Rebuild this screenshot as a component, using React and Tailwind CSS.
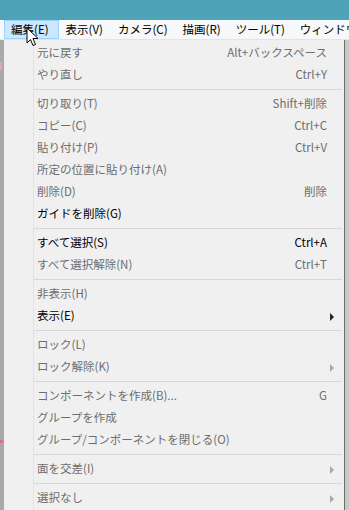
import React from "react";

const FONT = { fontFamily: '"Noto Sans CJK JP", "Noto Sans", sans-serif' };

const menuBar = [
  { label: "編集(E)", active: true },
  { label: "表示(V)" },
  { label: "カメラ(C)" },
  { label: "描画(R)" },
  { label: "ツール(T)" },
  { label: "ウィンドウ(W)" },
];

// sep: 区切り線, off: 無効項目, sub: サブメニュー矢印
const items = [
  { label: "元に戻す", key: "Alt+バックスペース", off: true },
  { label: "やり直し", key: "Ctrl+Y", off: true },
  { sep: true },
  { label: "切り取り(T)", key: "Shift+削除", off: true },
  { label: "コピー(C)", key: "Ctrl+C", off: true },
  { label: "貼り付け(P)", key: "Ctrl+V", off: true },
  { label: "所定の位置に貼り付け(A)", off: true },
  { label: "削除(D)", key: "削除", off: true },
  { label: "ガイドを削除(G)" },
  { sep: true },
  { label: "すべて選択(S)", key: "Ctrl+A" },
  { label: "すべて選択解除(N)", key: "Ctrl+T", off: true },
  { sep: true },
  { label: "非表示(H)", off: true },
  { label: "表示(E)", sub: true },
  { sep: true },
  { label: "ロック(L)", off: true },
  { label: "ロック解除(K)", off: true, sub: true },
  { sep: true },
  { label: "コンポーネントを作成(B)...", key: "G", off: true },
  { label: "グループを作成", off: true },
  { label: "グループ/コンポーネントを閉じる(O)", off: true },
  { sep: true },
  { label: "面を交差(I)", off: true, sub: true },
  { sep: true },
  { label: "選択なし", off: true, sub: true },
];

const Cursor = () => (
  <svg className="absolute left-[26px] top-[27px]" width="13" height="20" viewBox="0 0 13 20">
    <path
      d="M1 1 L1 16 L4.5 12.5 L7 18.5 L9.5 17.5 L7 11.5 L12 11.5 Z"
      fill="#fff"
      stroke="#000"
      strokeWidth="1"
      strokeLinejoin="round"
    />
  </svg>
);

export default function App() {
  return (
    <div className="relative w-[349px] h-[510px] overflow-hidden bg-[#f0f0f0] text-[11.5px]" style={FONT}>
      <div className="h-[20px] bg-[#4fa3b6]" />
      <div className="h-[20px] bg-[#f7f8f9] flex items-center pl-[4px] border-b border-[#e4e4e4]">
        {menuBar.map((m) => (
          <div
            key={m.label}
            className={`h-[19px] flex items-center pl-[6px] whitespace-nowrap text-black ${
              m.active ? "pr-[9px] bg-[#cce8ff] border border-[#99d1ff]" : "pr-[7px] border border-transparent"
            }`}
          >
            {m.label}
          </div>
        ))}
      </div>

      <div className="flex h-[470px]">
        <div className="w-[4px] bg-[#a9a9a9] flex flex-col">
          <div className="h-[22px]" />
          <div className="h-[8px] w-[2px] bg-[#e9a3b5]" />
          <div className="h-[370px]" />
          <div className="h-[3px] w-[3px] bg-[#d9708c]" />
        </div>
        <div className="w-[341px] relative bg-[#f0f0f0] border-r border-[#6e6e6e] pt-[2px]">
          <div className="absolute left-[29px] top-0 bottom-0 w-px bg-[#e3e3e3]" />
          {items.map((it, i) =>
            it.sep ? (
              <div key={i} className="h-[7px] flex items-center pl-[30px] pr-[2px]">
                <div className="h-px w-full bg-[#d7d7d7]" />
              </div>
            ) : (
              <div
                key={i}
                className={`relative h-[22px] flex items-center pl-[33px] pr-[17px] whitespace-nowrap ${
                  it.off ? "text-[#6d6d6d]" : "text-black"
                }`}
              >
                <span className="flex-1">{it.label}</span>
                {it.key && <span>{it.key}</span>}
                {it.sub && (
                  <span
                    className={`absolute right-[10px] top-[8px] w-0 h-0 border-y-[4px] border-y-transparent border-l-[4px] ${
                      it.off ? "border-l-[#a8a8a8]" : "border-l-[#222]"
                    }`}
                  />
                )}
              </div>
            )
          )}
        </div>
        <div className="flex-1 bg-[#c9c9c9]" />
      </div>
      <Cursor />
    </div>
  );
}
